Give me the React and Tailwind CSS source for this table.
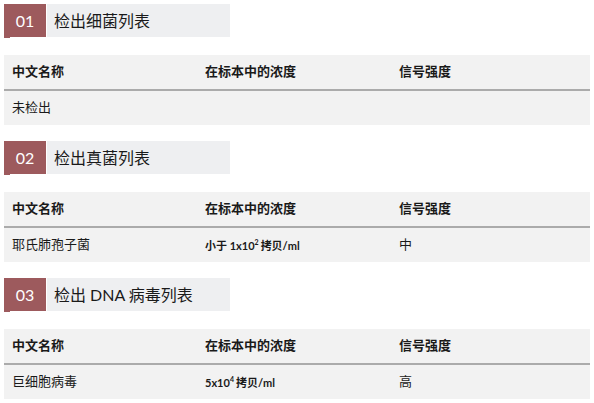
import React from 'react';

const sections = [
  {
    no: '01',
    title: '检出细菌列表',
    rows: [{ name: '未检出', conc: null, signal: '' }],
  },
  {
    no: '02',
    title: '检出真菌列表',
    rows: [{ name: '耶氏肺孢子菌', conc: { pre: '小于 1x10', exp: '2' }, signal: '中' }],
  },
  {
    no: '03',
    title: '检出 DNA 病毒列表',
    rows: [{ name: '巨细胞病毒', conc: { pre: '5x10', exp: '4' }, signal: '高' }],
  },
];

const SectionTitle = ({ no, title }) => (
  <div className="relative flex h-[33px] w-[226px]">
    <div className="flex w-[42px] items-center justify-center bg-[#9d5a5d] text-[16px] text-white">
      {no}
    </div>
    <div className="ml-px flex flex-1 items-center bg-[#eeeff1] pl-[7px] text-[16px] text-[#1a1a1a]">
      {title}
    </div>
    <span className="absolute left-0 top-[33px] h-px w-[6px] bg-[#9d5a5d]" />
  </div>
);

const Table = ({ rows }) => (
  <div className="mt-[18px] bg-[#f2f2f2] text-[13px] text-[#1a1a1a]">
    <div className="grid h-[36px] grid-cols-[193px_194px_1fr] items-center border-b-2 border-[#ababab] font-bold">
      <div className="pl-2">中文名称</div>
      <div className="pl-2">在标本中的浓度</div>
      <div className="pl-2">信号强度</div>
    </div>
    {rows.map((r) => (
      <div key={r.name} className="grid h-[34px] grid-cols-[193px_194px_1fr] items-center">
        <div className="pl-2">{r.name}</div>
        <div className="pl-2 text-[11px] leading-none font-bold">
          {r.conc && (
            <span>
              {r.conc.pre}
              <sup className="relative -top-[5px] mr-[2px] text-[7px]">{r.conc.exp}</sup>
              拷贝/ml
            </span>
          )}
        </div>
        <div className="pl-2">{r.signal}</div>
      </div>
    ))}
  </div>
);

export default function App() {
  return (
    <div
      className="w-[594px] h-[403px] bg-white p-1"
      style={{ fontFamily: 'Lato, "Noto Sans CJK SC", sans-serif' }}
    >
      {sections.map((s, i) => (
        <div key={s.no} className={i < sections.length - 1 ? 'mb-4' : ''}>
          <SectionTitle no={s.no} title={s.title} />
          <Table rows={s.rows} />
        </div>
      ))}
    </div>
  );
}
